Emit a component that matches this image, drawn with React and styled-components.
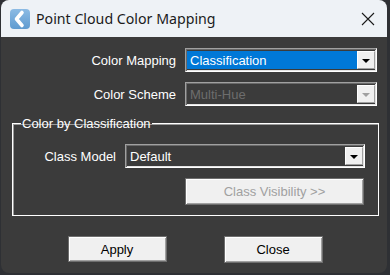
import React from 'react';
import styled, { createGlobalStyle } from 'styled-components';

const Global = createGlobalStyle`
  html, body { margin: 0; padding: 0; width: 390px; height: 275px; overflow: hidden; background: #2e3034; }
  body { font-family: "Liberation Sans", Arial, sans-serif; font-size: 13px; }
`;

const Window = styled.div`
  margin-left: 1px;
  width: 386px;
  height: 273px;
  background: #3b3b3b;
  border-radius: 8px;
  overflow: hidden;
  display: flex;
  flex-direction: column;
`;

const TitleBar = styled.div`
  height: 37px;
  flex: none;
  background: #eef2f6;
  display: flex;
  align-items: center;
  padding: 0 12px 0 9px;
`;

const Title = styled.div`
  flex: 1;
  margin-left: 6px;
  font-family: "Noto Sans", "Open Sans", sans-serif;
  font-size: 14.2px;
  color: #1b1b1b;
  padding-bottom: 1px;
`;

const Body = styled.div`
  display: flex;
  flex-direction: column;
  padding: 11px 8px 0 10px;
`;

const Row = styled.div`
  display: grid;
  grid-template-columns: 1fr ${p => p.$field}px;
  column-gap: 9px;
  align-items: center;
  margin-top: ${p => p.$top || 0}px;
  padding-right: ${p => p.$right || 0}px;
`;

const Label = styled.div`
  text-align: right;
  color: #ffffff;
  white-space: nowrap;
`;

const Combo = styled.div`
  height: 24px;
  box-sizing: border-box;
  display: flex;
  border: 1px solid;
  border-color: #a0a0a0 #ffffff #ffffff #a0a0a0;
  box-shadow: inset 1px 1px #696969, inset -1px -1px #e3e3e3;
  padding: 2px 1px 2px 1px;
  background: #3b3b3b;
`;

const Value = styled.div`
  flex: 1;
  display: flex;
  align-items: center;
  padding-left: 3px;
  background: ${p => (p.$selected ? '#0078d7' : 'transparent')};
  color: ${p => (p.$disabled ? '#6d6d6d' : '#ffffff')};
`;

const DropButton = styled.div`
  width: 18px;
  box-sizing: border-box;
  background: #f0f0f0;
  border: 1px solid;
  border-color: #ffffff #a0a0a0 #a0a0a0 #ffffff;
  display: flex;
  align-items: center;
  justify-content: center;
`;

const Arrow = styled.div`
  width: 0;
  height: 0;
  border-left: 4px solid transparent;
  border-right: 4px solid transparent;
  border-top: 4px solid ${p => (p.$disabled ? '#a0a0a0' : '#000000')};
  margin-top: 1px;
`;

const Group = styled.fieldset`
  margin: 10px 0 0 1px;
  padding: 13px 13px 10px 0;
  border: 1px solid #ffffff;
  box-shadow: inset 1px 1px #9a9a9a;
  min-width: 0;
`;

const Legend = styled.legend`
  margin-left: 8px;
  padding: 0 1px;
  color: #ffffff;
  font-size: 13px;
  line-height: 15px;
`;

const ButtonRow = styled.div`
  display: flex;
  justify-content: ${p => p.$justify || 'center'};
  gap: 57px;
  margin-top: ${p => p.$top || 0}px;
  padding-right: ${p => p.$right || 0}px;
`;

const Button = styled.div`
  width: ${p => p.$w}px;
  height: ${p => p.$h}px;
  box-sizing: border-box;
  background: #f0f0f0;
  border: 1px solid #6e6e6e;
  box-shadow: inset 1px 1px #ffffff, inset -1px -1px #a0a0a0;
  display: flex;
  align-items: center;
  justify-content: center;
  color: ${p => (p.$disabled ? '#a0a0a0' : '#000000')};
`;

const Select = ({ value, selected, disabled }) => (
  <Combo>
    <Value $selected={selected} $disabled={disabled}>{value}</Value>
    <DropButton><Arrow $disabled={disabled} /></DropButton>
  </Combo>
);

const AppIcon = () => (
  <svg width="20" height="20" viewBox="0 0 20 20">
    <defs>
      <linearGradient id="ig" x1="0" y1="0" x2="0" y2="1">
        <stop offset="0" stopColor="#8cbbe4" />
        <stop offset="1" stopColor="#5f9bd0" />
      </linearGradient>
    </defs>
    <rect x="0" y="0" width="20" height="20" rx="4" fill="url(#ig)" />
    <path d="M12 3.5 L6.5 10 L12 16.5" fill="none" stroke="#ffffff" strokeWidth="3.6" strokeLinecap="round" strokeLinejoin="round" />
  </svg>
);

const CloseIcon = () => (
  <svg width="14" height="14" viewBox="0 0 14 14">
    <path d="M1 1 L13 13 M13 1 L1 13" stroke="#1b1b1b" strokeWidth="1.1" />
  </svg>
);

export default function App() {
  return (
    <>
      <Global />
      <Window>
        <TitleBar>
          <AppIcon />
          <Title>Point Cloud Color Mapping</Title>
          <CloseIcon />
        </TitleBar>
        <Body>
          <Row $field={192} $right={2}>
            <Label>Color Mapping</Label>
            <Select value="Classification" selected />
          </Row>
          <Row $field={192} $right={2} $top={10}>
            <Label>Color Scheme</Label>
            <Select value="Multi-Hue" disabled />
          </Row>
          <Group>
            <Legend>Color by Classification</Legend>
            <Row $field={240}>
              <Label>Class Model</Label>
              <Select value="Default" />
            </Row>
            <ButtonRow $justify="flex-end" $top={10} $right={1}>
              <Button $w={179} $h={27} $disabled>Class Visibility &gt;&gt;</Button>
            </ButtonRow>
          </Group>
          <ButtonRow $top={20}>
            <Button $w={99} $h={26}>Apply</Button>
            <Button $w={99} $h={27}>Close</Button>
          </ButtonRow>
        </Body>
      </Window>
    </>
  );
}
